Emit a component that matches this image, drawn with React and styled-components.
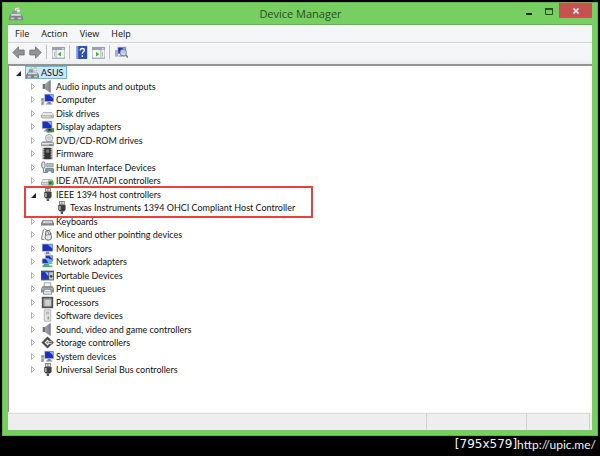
import React from "react";
import styled, { createGlobalStyle } from "styled-components";

const Global = createGlobalStyle`
  *, *::before, *::after { box-sizing: border-box; }
  html, body { margin: 0; background: #000; }
  body { font-family: Lato, "Open Sans", sans-serif; font-size: 9px; color: #111; }
  button { font: inherit; color: inherit; padding: 0; border: 0; background: none; }
`;

const Screen = styled.div`
  display: flex;
  flex-direction: column;
  min-height: 100vh;
  padding: 2px 2px 0;
`;

const Window = styled.main`
  flex: 1;
  display: flex;
  flex-direction: column;
  border: 1px solid #63b550;
  background: #77cf62;
  padding: 0 5px 5px;
`;

const TitleBar = styled.header`
  display: grid;
  grid-template-columns: 1fr auto 1fr;
  height: 22px;
  padding-left: 1px;
  border-bottom: 1px solid #62b44e;
`;

const TitleIcon = styled.span`
  display: flex;
  align-items: center;
  svg { width: 14px; height: 14px; }
`;

const Title = styled.h1`
  margin: 0;
  font: 400 11px/22px "Open Sans", sans-serif;
  color: #2c4a25;
`;

const Controls = styled.div`
  display: flex;
  justify-content: flex-end;
`;

const ControlButton = styled.button`
  display: flex;
  justify-content: center;
  align-items: center;
  width: ${(p) => (p.$close ? 33 : 20)}px;
  height: 15px;
  background: ${(p) => (p.$close ? "#c75050" : "transparent")};
  svg { width: 10px; height: 10px; }
`;

const MenuBar = styled.nav`
  display: flex;
  gap: 12px;
  height: 18px;
  padding: 0 7px;
  background: #f5f6f7;
  border-bottom: 1px solid #d3d4d6;
`;

const MenuButton = styled.button`
  font-family: "Open Sans", sans-serif;
  line-height: 16px;
`;

const Toolbar = styled.div`
  display: flex;
  align-items: center;
  height: 21px;
  padding: 0 2px 4px;
  background: linear-gradient(#f5f6f7 70%, #ebecee);
  border-top: 1px solid #fff;
`;

const ToolButton = styled.button`
  display: flex;
  justify-content: center;
  width: 17px;
  svg { width: 13px; height: 13px; }
`;

const Divider = styled.span`
  width: 1px;
  height: 14px;
  margin: 0 3px 0 2px;
  background: #bfc0c2;
`;

const TreePane = styled.section`
  flex: 1;
  background: #fff;
  border-top: 2px solid #929395;
  border-left: 1px solid #929395;
`;

const Tree = styled.ul`
  display: grid;
  grid-auto-rows: 13px 14px;
  margin: 0;
  padding: 0 0 8px 6px;
  list-style: none;
`;

const indents = { 1: 0, 2: 15, 3: 39 };

const Row = styled.li`
  position: relative;
  display: flex;
  align-items: center;
  padding-left: ${(p) => indents[p.$level]}px;
`;

const Expander = styled.button`
  display: flex;
  width: 10px;
  height: 9px;
  svg { width: 8px; height: 9px; }
`;

const Node = styled.span`
  display: flex;
  align-items: center;
  gap: 2px;
  height: 13px;
  padding: 0 4px 0 1px;
  white-space: nowrap;
  background: ${(p) => (p.$selected ? "#cbe8f6" : "transparent")};
  outline: ${(p) => (p.$selected ? "1px solid #62b9df" : "none")};
  outline-offset: -1px;
  svg { width: 13px; height: 13px; flex: none; }
`;

const Callout = styled.span`
  position: absolute;
  top: -1px;
  left: 9px;
  width: 289px;
  height: 32px;
  border: 2px solid #e8413b;
  pointer-events: none;
`;

const StatusBar = styled.footer`
  display: grid;
  grid-template-columns: 1fr 100px 63px 2px;
  height: 18px;
  background: #eee;
  border-top: 1px solid #f7f7f7;
`;

const StatusCell = styled.span`
  border-top: 1px solid #dcdcdc;
  border-right: 1px solid #d2d2d2;
`;

const Watermark = styled.footer`
  display: flex;
  justify-content: flex-end;
  height: 20px;
  padding-right: 2px;
  color: #f4f4f4;
  font: 12px/17px Lato, sans-serif;
`;

const Dimensions = styled.span`
  font: 12px/17px "DejaVu Sans", sans-serif;
`;

const Svg = ({ children }) => (
  <svg viewBox="0 0 16 16" aria-hidden="true">{children}</svg>
);

const Monitor = ({ x = 3, y = 2, w = 11, h = 8 }) => (
  <>
    <rect x={x} y={y} width={w} height={h} fill="#a9b4c4" />
    <rect x={x + 1} y={y + 1} width={w - 2} height={h - 2} fill="#1c2fc0" />
    <path d={`M${x + w / 2} ${y + 1}h${w / 2 - 1}v${h / 2}z`} fill="#8ba9f4" />
    <path d={`M${x + w / 2 - 2} ${y + h}h4v2h2v1h-8v-1h2z`} fill="#7d8791" />
  </>
);

const Plug = () => (
  <Svg>
    <path d="M5 0h7v5H5z" fill="#777" />
    <path d="M6 1h2v3H6zM9 1h2v3H9z" fill="#ddd" />
    <path d="M4 5h9v6l-2 2H6l-2-2z" fill="#3f3f3f" />
    <path d="M5 6h2v5H5z" fill="#b0b0b0" />
    <path d="M7 13h3v3H7z" fill="#555" />
  </Svg>
);

const Drive = () => (
  <>
    <path d="M3 6h10l3 4v3l-2 1H2l-2-1v-3z" fill="#a4a6a8" />
    <path d="M3 7h10l2 3H1z" fill="#e9ebec" />
    <path d="M1 11h14v1l-1 1H2l-1-1z" fill="#d5d7d8" />
  </>
);

const Speaker = () => (
  <Svg>
    <path d="M2 5h4v6H2z" fill="#6d7277" />
    <path d="M5 5l6-5v16l-6-5z" fill="#b1b7bc" />
    <path d="M9 2l3-2v16l-3-3z" fill="#7b8086" />
    <path d="M5 5l4-3v12l-4-3z" fill="#959ba1" />
  </Svg>
);

const ComputerIcon = () => (
  <Svg>
    <rect x="0" y="6" width="4" height="9" fill="#b6bec5" />
    <path d="M1 7h2v2H1z" fill="#4a9c4e" />
    <path d="M1 11h2v3H1z" fill="#8b949d" />
    <Monitor x={4} y={1} w={12} h={10} />
  </Svg>
);

const icons = {
  device: (
    <Svg>
      <path d="M7 1l5-1 1 6H5z" fill="#eef1ef" stroke="#96a09b" strokeWidth=".7" />
      <path d="M8 3l4-1" stroke="#d39c35" />
      <path d="M2 8h12l2 3v4H0v-4z" fill="#7c8489" />
      <path d="M3 8h10l1 2H2z" fill="#d7dcdf" />
      <path d="M2 12h4v2H2zM10 12h4v2h-4z" fill="#c7cdd1" />
      <path d="M4 4h5v4H3z" fill="#8e989d" />
    </Svg>
  ),
  speaker: <Speaker />,
  computer: <ComputerIcon />,
  disk: (
    <Svg>
      <Drive />
      <path d="M12 11h2v1h-2z" fill="#5bb45a" />
    </Svg>
  ),
  display: (
    <Svg>
      <Monitor x={1} y={1} w={13} h={10} />
      <path d="M7 10h9v5H7z" fill="#43875a" />
      <path d="M9 11h3v2H9z" fill="#222" />
      <path d="M7 15h7v1H7z" fill="#c7a94b" />
    </Svg>
  ),
  dvd: (
    <Svg>
      <circle cx="10" cy="5" r="4.500" fill="#dfe5e8" stroke="#8e979c" />
      <circle cx="10" cy="5" r="1.500" fill="#fff" stroke="#8e979c" strokeWidth=".8" />
      <path d="M2 9h12l2 2v4H0v-4z" fill="#96999c" />
      <path d="M1 11h14v2H1z" fill="#e2e4e5" />
      <path d="M10 13h4v1h-4z" fill="#555" />
    </Svg>
  ),
  firmware: (
    <Svg>
      <path d="M2 1h12v14H2z" fill="#777" />
      <path d="M4 1h8v14H4z" fill="#333" />
      <path d="M2 3h2M2 6h2M2 9h2M2 12h2M12 3h2M12 6h2M12 9h2M12 12h2" stroke="#ddd" />
      <path d="M6 3h4v4H6z" fill="#777" />
    </Svg>
  ),
  hid: (
    <Svg>
      <rect x="1" y="1" width="4" height="8" rx="2" fill="#dfe2e4" stroke="#61676b" />
      <path d="M3 9v5h3" fill="none" stroke="#61676b" />
      <path d="M7 3h8v4H7z" fill="#b8bec3" stroke="#7a8288" strokeWidth=".8" />
      <path d="M6 9h9l1 5h-3l-1-2H9l-1 2H5z" fill="#76a1b7" stroke="#4f6674" strokeWidth=".8" />
    </Svg>
  ),
  ide: (
    <Svg>
      <Drive />
      <path d="M9 8h6v6H9z" fill="#4fa45e" />
      <path d="M10 10h3v2h-3z" fill="#245e36" />
    </Svg>
  ),
  plug: <Plug />,
  keyboard: (
    <Svg>
      <path d="M2 6h12l2 4v3H0v-3z" fill="#7d8285" />
      <path d="M3 7h10l1 3H2z" fill="#dadddf" />
      <path d="M3 8.500h10" stroke="#92979b" strokeWidth=".8" strokeDasharray="1 1" />
    </Svg>
  ),
  mouse: (
    <Svg>
      <path d="M4 1l5 3 3-3" fill="none" stroke="#777" />
      <path d="M6 4q3-2 5 0l2 7q0 4-4 4t-4-3z" fill="#e4e6e7" stroke="#54585b" />
      <path d="M8 4l2 4M10 8l3-1M10 8l-4 1" stroke="#54585b" strokeWidth=".8" />
      <path d="M3 2L1 11v3h3" fill="none" stroke="#555" />
    </Svg>
  ),
  monitor: (
    <Svg>
      <Monitor x={1} y={2} w={14} h={10} />
    </Svg>
  ),
  network: (
    <Svg>
      <Monitor x={5} y={0} w={10} h={8} />
      <Monitor x={1} y={4} w={9} h={7} />
      <circle cx="11" cy="8" r="3" fill="#68b7d8" />
      <path d="M2 13h12v2H2z" fill="#43b46c" />
      <path d="M6 11h4v3H6z" fill="#43b46c" />
    </Svg>
  ),
  portable: (
    <Svg>
      <rect x="0" y="2" width="16" height="12" fill="#4b5664" />
      <rect x="1" y="4" width="8" height="8" fill="#1d35bf" />
      <path d="M5 4h4v5z" fill="#a6bdf6" />
      <rect x="10" y="4" width="5" height="9" fill="#c2c8ce" />
      <circle cx="12.500" cy="9" r="1.700" fill="#444" />
    </Svg>
  ),
  printer: (
    <Svg>
      <path d="M4 1h8v6H4z" fill="#f4f6f7" stroke="#8b9196" />
      <path d="M2 5h12l2 3v5H0V8z" fill="#8c9195" />
      <path d="M1 8h14v1H1z" fill="#d0d4d7" />
      <path d="M4 9h8l1 6H3z" fill="#f6fafc" stroke="#6d7377" />
      <path d="M5 12h6" stroke="#56a6d4" />
    </Svg>
  ),
  processor: (
    <Svg>
      <rect x="1" y="1" width="14" height="14" fill="#4e4e4e" />
      <rect x="3" y="3" width="10" height="10" fill="#a9aaaa" />
      <rect x="5" y="5" width="7" height="7" fill="#ced0d0" />
    </Svg>
  ),
  software: (
    <Svg>
      <path d="M4 1h8v14H4z" fill="#e4e5e5" stroke="#a8aaaa" />
      <path d="M6 4h4M6 6h4" stroke="#999" />
      <path d="M8 9h2v4H8z" fill="#85a889" />
    </Svg>
  ),
  storage: (
    <Svg>
      <path d="M8 1l5 5h-3L8 4 4 8l4 4 2-2h3l-5 5-7-7z" fill="#454545" stroke="#454545" strokeWidth=".6" />
      <circle cx="8" cy="8" r="1.500" fill="#888" />
      <path d="M10 7h3V5l3 3-3 3V9h-3z" fill="#666" />
    </Svg>
  ),
};

const devices = [
  ["Audio inputs and outputs", "speaker"],
  ["Computer", "computer"],
  ["Disk drives", "disk"],
  ["Display adapters", "display"],
  ["DVD/CD-ROM drives", "dvd"],
  ["Firmware", "firmware"],
  ["Human Interface Devices", "hid"],
  ["IDE ATA/ATAPI controllers", "ide"],
  ["IEEE 1394 host controllers", "plug", "Texas Instruments 1394 OHCI Compliant Host Controller"],
  ["Keyboards", "keyboard"],
  ["Mice and other pointing devices", "mouse"],
  ["Monitors", "monitor"],
  ["Network adapters", "network"],
  ["Portable Devices", "portable"],
  ["Print queues", "printer"],
  ["Processors", "processor"],
  ["Software devices", "software"],
  ["Sound, video and game controllers", "speaker"],
  ["Storage controllers", "storage"],
  ["System devices", "computer"],
  ["Universal Serial Bus controllers", "plug"],
];

const Arrow = ({ open }) => (
  <svg viewBox="0 0 8 9" aria-hidden="true">
    {open ? (
      <path d="M6 3v5H1z" fill="#222" />
    ) : (
      <path d="M1.500 1.500v6l3-3z" fill="#fff" stroke="#a6a6a6" strokeWidth=".9" />
    )}
  </svg>
);

function TreeRow({ level, label, icon, open, leaf, selected, children }) {
  return (
    <Row role="treeitem" aria-level={level} aria-expanded={leaf ? undefined : !!open} $level={level}>
      {leaf ? null : (
        <Expander aria-label={`${open ? "Collapse" : "Expand"} ${label}`}>
          <Arrow open={open} />
        </Expander>
      )}
      <Node $selected={selected}>
        {icons[icon]}
        {label}
      </Node>
      {children}
    </Row>
  );
}

const NavArrow = ({ right }) => (
  <Svg>
    <path
      d={right ? "M15 8L8 1v4H1v6h7v4z" : "M1 8l7-7v4h7v6H8v4z"}
      fill="#929395"
      stroke="#707173"
    />
  </Svg>
);

const PanelIcon = ({ right }) => (
  <Svg>
    <rect x="0" y="2" width="16" height="13" fill="#f7f8f8" stroke="#7d858c" />
    <path d="M0 2h16v3H0z" fill="#9aa3ab" />
    <path d="M12 3.500h3" stroke="#fff" />
    <path d={right ? "M11 5v10M13 7v6" : "M5 5v10M3 7v6"} stroke="#9aa3ab" />
    <path d={right ? "M5 7l4 3-4 3z" : "M11 7l-4 3 4 3z"} fill="#3fae3a" />
  </Svg>
);

export default function App() {
  return (
    <>
      <Global />
      <Screen>
        <Window>
          <TitleBar>
            <TitleIcon>{icons.device}</TitleIcon>
            <Title>Device Manager</Title>
            <Controls>
              <ControlButton aria-label="Minimize">
                <svg viewBox="0 0 10 10"><path d="M2 7h6v2H2z" fill="#222" /></svg>
              </ControlButton>
              <ControlButton aria-label="Maximize">
                <svg viewBox="0 0 10 10"><path d="M1.500 3v5.500h7V3" fill="none" stroke="#2e4b28" /><path d="M1 2h8v2H1z" fill="#2e4b28" /></svg>
              </ControlButton>
              <ControlButton $close aria-label="Close">
                <svg viewBox="0 0 10 10"><path d="M2.500 2.500l5 5M7.500 2.500l-5 5" stroke="#fff" strokeWidth="1.700" /></svg>
              </ControlButton>
            </Controls>
          </TitleBar>
          <MenuBar aria-label="Main menu">
            {["File", "Action", "View", "Help"].map((m) => (
              <MenuButton key={m}>{m}</MenuButton>
            ))}
          </MenuBar>
          <Toolbar role="toolbar" aria-label="Tools">
            <ToolButton aria-label="Back"><NavArrow /></ToolButton>
            <ToolButton aria-label="Forward"><NavArrow right /></ToolButton>
            <Divider />
            <ToolButton aria-label="Show console tree"><PanelIcon /></ToolButton>
            <Divider />
            <ToolButton aria-label="Help">
              <Svg>
                <rect x="2" y="0" width="13" height="16" fill="#2c4fbd" />
                <path d="M2 0h2v16H2z" fill="#7f9be6" />
                <path d="M6.500 5.500q0-2.500 2.500-2.500t2.500 2.200q0 1.300-1.500 2.200-1 .6-1 2.100M9 11.500v2" fill="none" stroke="#fff" strokeWidth="1.700" />
              </Svg>
            </ToolButton>
            <ToolButton aria-label="Show action pane"><PanelIcon right /></ToolButton>
            <Divider />
            <ToolButton aria-label="Scan for hardware changes">
              <Svg>
                <path d="M0 5h4v8H0z" fill="#a8afb5" />
                <Monitor x={3} y={1} w={11} h={9} />
                <circle cx="10" cy="8" r="4" fill="#d9ecf6" fillOpacity=".8" stroke="#6b7780" />
                <path d="M13 11l3 3" stroke="#6b7780" strokeWidth="2" />
              </Svg>
            </ToolButton>
          </Toolbar>
          <TreePane>
            <Tree role="tree" aria-label="Devices">
              <TreeRow level={1} label="ASUS" icon="device" open selected />
              {devices.map(([label, icon, child]) => (
                <React.Fragment key={label}>
                  <TreeRow level={2} label={label} icon={icon} open={!!child}>
                    {child && <Callout />}
                  </TreeRow>
                  {child && <TreeRow level={3} label={child} icon={icon} leaf />}
                </React.Fragment>
              ))}
            </Tree>
          </TreePane>
          <StatusBar aria-label="Status">
            <StatusCell />
            <StatusCell />
            <StatusCell />
          </StatusBar>
        </Window>
        <Watermark>
          <Dimensions>[795x579]</Dimensions>
          <span>http://upic.me/</span>
        </Watermark>
      </Screen>
    </>
  );
}
